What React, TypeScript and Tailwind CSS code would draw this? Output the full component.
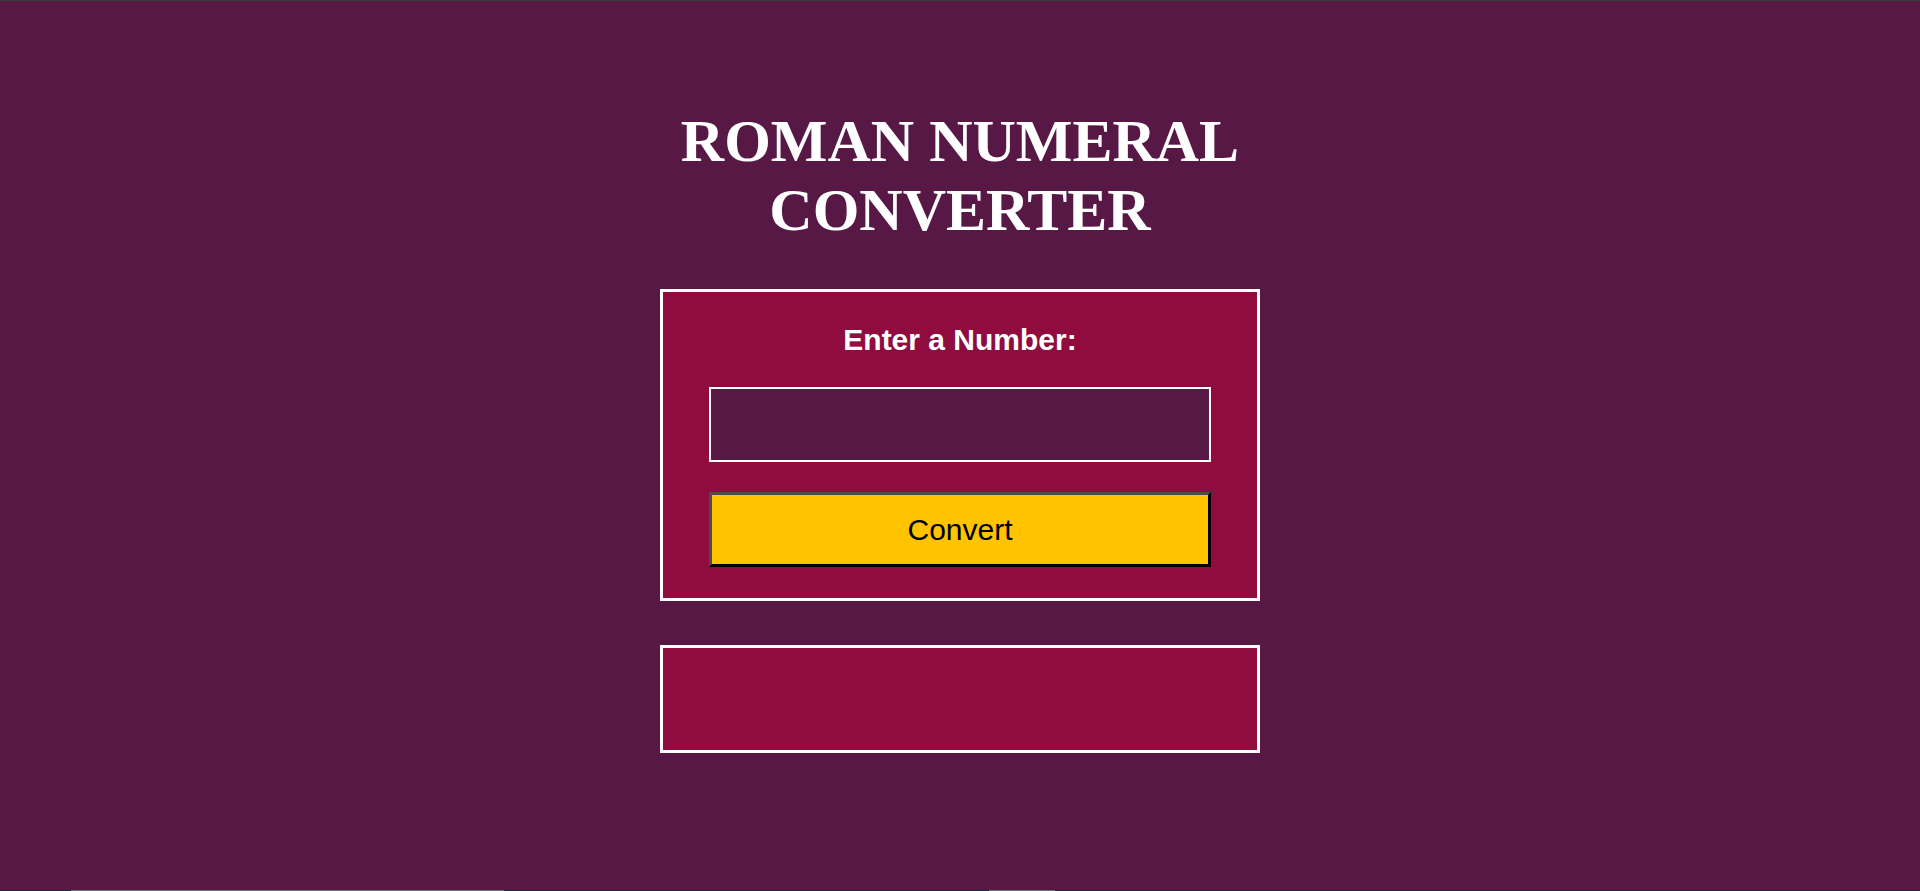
import React from 'react';

export default function App() {
  return (
    <div className="h-[891px] flex flex-col bg-[#581845] overflow-hidden">
      {/* window edge */}
      <div className="h-px bg-[#3b3b3b]" />

      <main className="flex-1 flex flex-col items-center">
        <h1 className="w-[600px] mt-[106px] text-center text-white font-bold text-[60px] leading-[normal] font-['Liberation_Serif',serif]">
          ROMAN NUMERAL CONVERTER
        </h1>

        {/* Form */}
        <form
          className="mt-[44px] w-[600px] border-[3px] border-white bg-[#900C3F] px-[46px] pt-[31px] pb-[31px] flex flex-col font-['Liberation_Sans',Arial,sans-serif]"
          onSubmit={(e) => e.preventDefault()}
        >
          <label htmlFor="number" className="text-center text-white font-bold text-[30px] leading-[normal]">
            Enter a Number:
          </label>
          <input
            id="number"
            type="number"
            className="mt-[30px] h-[75px] w-full border-2 border-white bg-[#581845] text-white text-[30px] px-3 outline-none"
          />
          <button
            type="submit"
            className="mt-[30px] h-[75px] w-full bg-[#FFC300] text-black text-[30px] border-[3px] border-t-[#4d4d4d] border-l-[#4d4d4d] border-b-black border-r-black"
          >
            Convert
          </button>
        </form>

        {/* Output */}
        <div className="mt-[44px] w-[600px] h-[108px] border-[3px] border-white bg-[#900C3F]" />
      </main>

      {/* bottom strip */}
      <div className="h-px flex">
        <div className="w-[71px] bg-[#1d2b3a]" />
        <div className="w-[433px] bg-[#707070]" />
        <div className="w-[485px] bg-[#1d2b3a]" />
        <div className="w-[66px] bg-[#707070]" />
        <div className="flex-1 bg-[#1d2b3a]" />
      </div>
    </div>
  );
}
